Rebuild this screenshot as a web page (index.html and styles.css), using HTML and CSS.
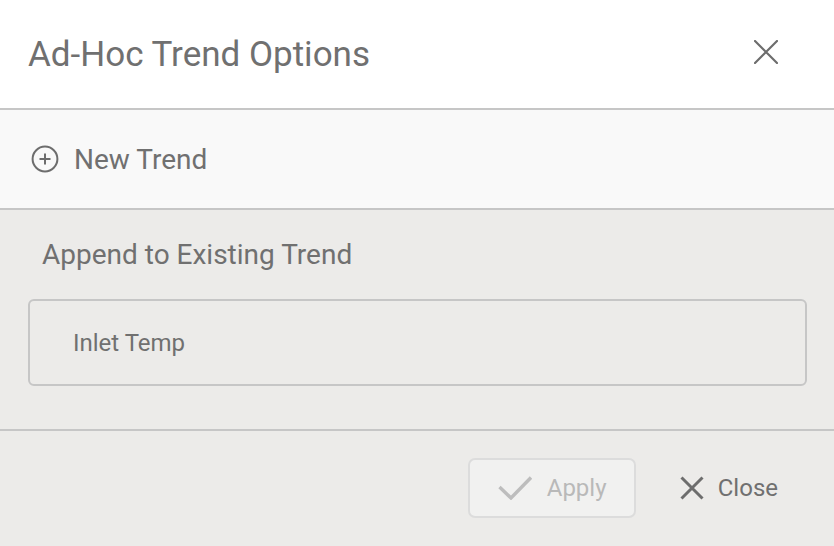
FILE: index.html
```html
<!DOCTYPE html>
<html lang="en">
<head>
    <meta charset="UTF-8">
    <meta name="viewport" content="width=device-width, initial-scale=1.0">
    <title>Ad-Hoc Trend Options</title>
    <link rel="stylesheet" href="styles.css">
</head>
<body>

<div class="dialog">
    <div class="header">
        <h1 class="title">Ad-Hoc Trend Options</h1>
        <button class="close-x" aria-label="Close">
            <svg width="24" height="24" viewBox="0 0 24 24">
                <path d="M1 1 L23 23 M23 1 L1 23" stroke="#6d6d6d" stroke-width="2.2" fill="none" stroke-linecap="round"/>
            </svg>
        </button>
    </div>

    <div class="new-trend">
        <svg class="plus-icon" width="28" height="28" viewBox="0 0 28 28">
            <circle cx="14" cy="14" r="12.4" stroke="#6d6d6d" stroke-width="2" fill="none"/>
            <path d="M14 8.5 V19.5 M8.5 14 H19.5" stroke="#6d6d6d" stroke-width="2" fill="none"/>
        </svg>
        <span>New Trend</span>
    </div>

    <div class="append">
        <h2 class="append-title">Append to Existing Trend</h2>
        <div class="trend-item">Inlet Temp</div>
    </div>

    <div class="footer">
        <button class="btn btn-apply" disabled>
            <svg width="34" height="24" viewBox="0 0 34 24">
                <path d="M1.5 11 L13 22 L33 1.5" stroke="#bdbdbd" stroke-width="3.4" fill="none"/>
            </svg>
            <span>Apply</span>
        </button>
        <button class="btn btn-close">
            <svg width="24" height="24" viewBox="0 0 24 24">
                <path d="M1.5 1.5 L22.5 22.5 M22.5 1.5 L1.5 22.5" stroke="#6d6d6d" stroke-width="3" fill="none"/>
            </svg>
            <span>Close</span>
        </button>
    </div>
</div>

</body>
</html>
```

FILE: styles.css
```css
body {
    margin: 0;
    font-family: Roboto, "Liberation Sans", sans-serif;
    color: #707070;
    background: #ecebe9;
}
.dialog {
    width: 834px;
    height: 546px;
    display: flex;
    flex-direction: column;
    overflow: hidden;
}
.header {
    height: 108px;
    background: #ffffff;
    border-bottom: 2px solid #c6c6c6;
    display: flex;
    align-items: center;
    justify-content: space-between;
    padding: 0 56px 0 28px;
}
.title {
    margin: 0;
    font-size: 35px;
    font-weight: 400;
    white-space: nowrap;
}
.close-x {
    background: none;
    border: none;
    padding: 0;
    margin-top: -4px;
    cursor: pointer;
    display: flex;
}
.new-trend {
    height: 98px;
    background: #f9f9f9;
    border-bottom: 2px solid #c6c6c6;
    display: flex;
    align-items: center;
    padding: 0 31px;
    gap: 15px;
    font-size: 28px;
}
.append {
    height: 219px;
    border-bottom: 2px solid #c6c6c6;
    padding: 0 27px 0 28px;
}
.append-title {
    margin: 0;
    padding: 28px 0 0 14px;
    height: 60px;
    font-size: 28px;
    font-weight: 400;
    white-space: nowrap;
}
.trend-item {
    margin-top: 1px;
    height: 83px;
    border: 2px solid #c6c6c6;
    border-radius: 6px;
    display: flex;
    align-items: center;
    padding-left: 43px;
    font-size: 24px;
}
.footer {
    flex: 1;
    display: flex;
    align-items: center;
    justify-content: flex-end;
    padding: 0 40px 0 0;
    gap: 28px;
}
.btn {
    font-family: inherit;
    font-size: 24px;
    background: none;
    border: none;
    display: flex;
    align-items: center;
    cursor: pointer;
}
.btn-apply {
    width: 168px;
    height: 60px;
    background: #f1f1f0;
    border: 2px solid #dcdcdc;
    border-radius: 7px;
    color: #b9b9b9;
    gap: 15px;
    padding: 0 0 0 28px;
    margin-top: -2px;
}
.btn-close {
    color: #707070;
    gap: 14px;
    padding: 0 16px;
    margin-top: -1px;
}
```
